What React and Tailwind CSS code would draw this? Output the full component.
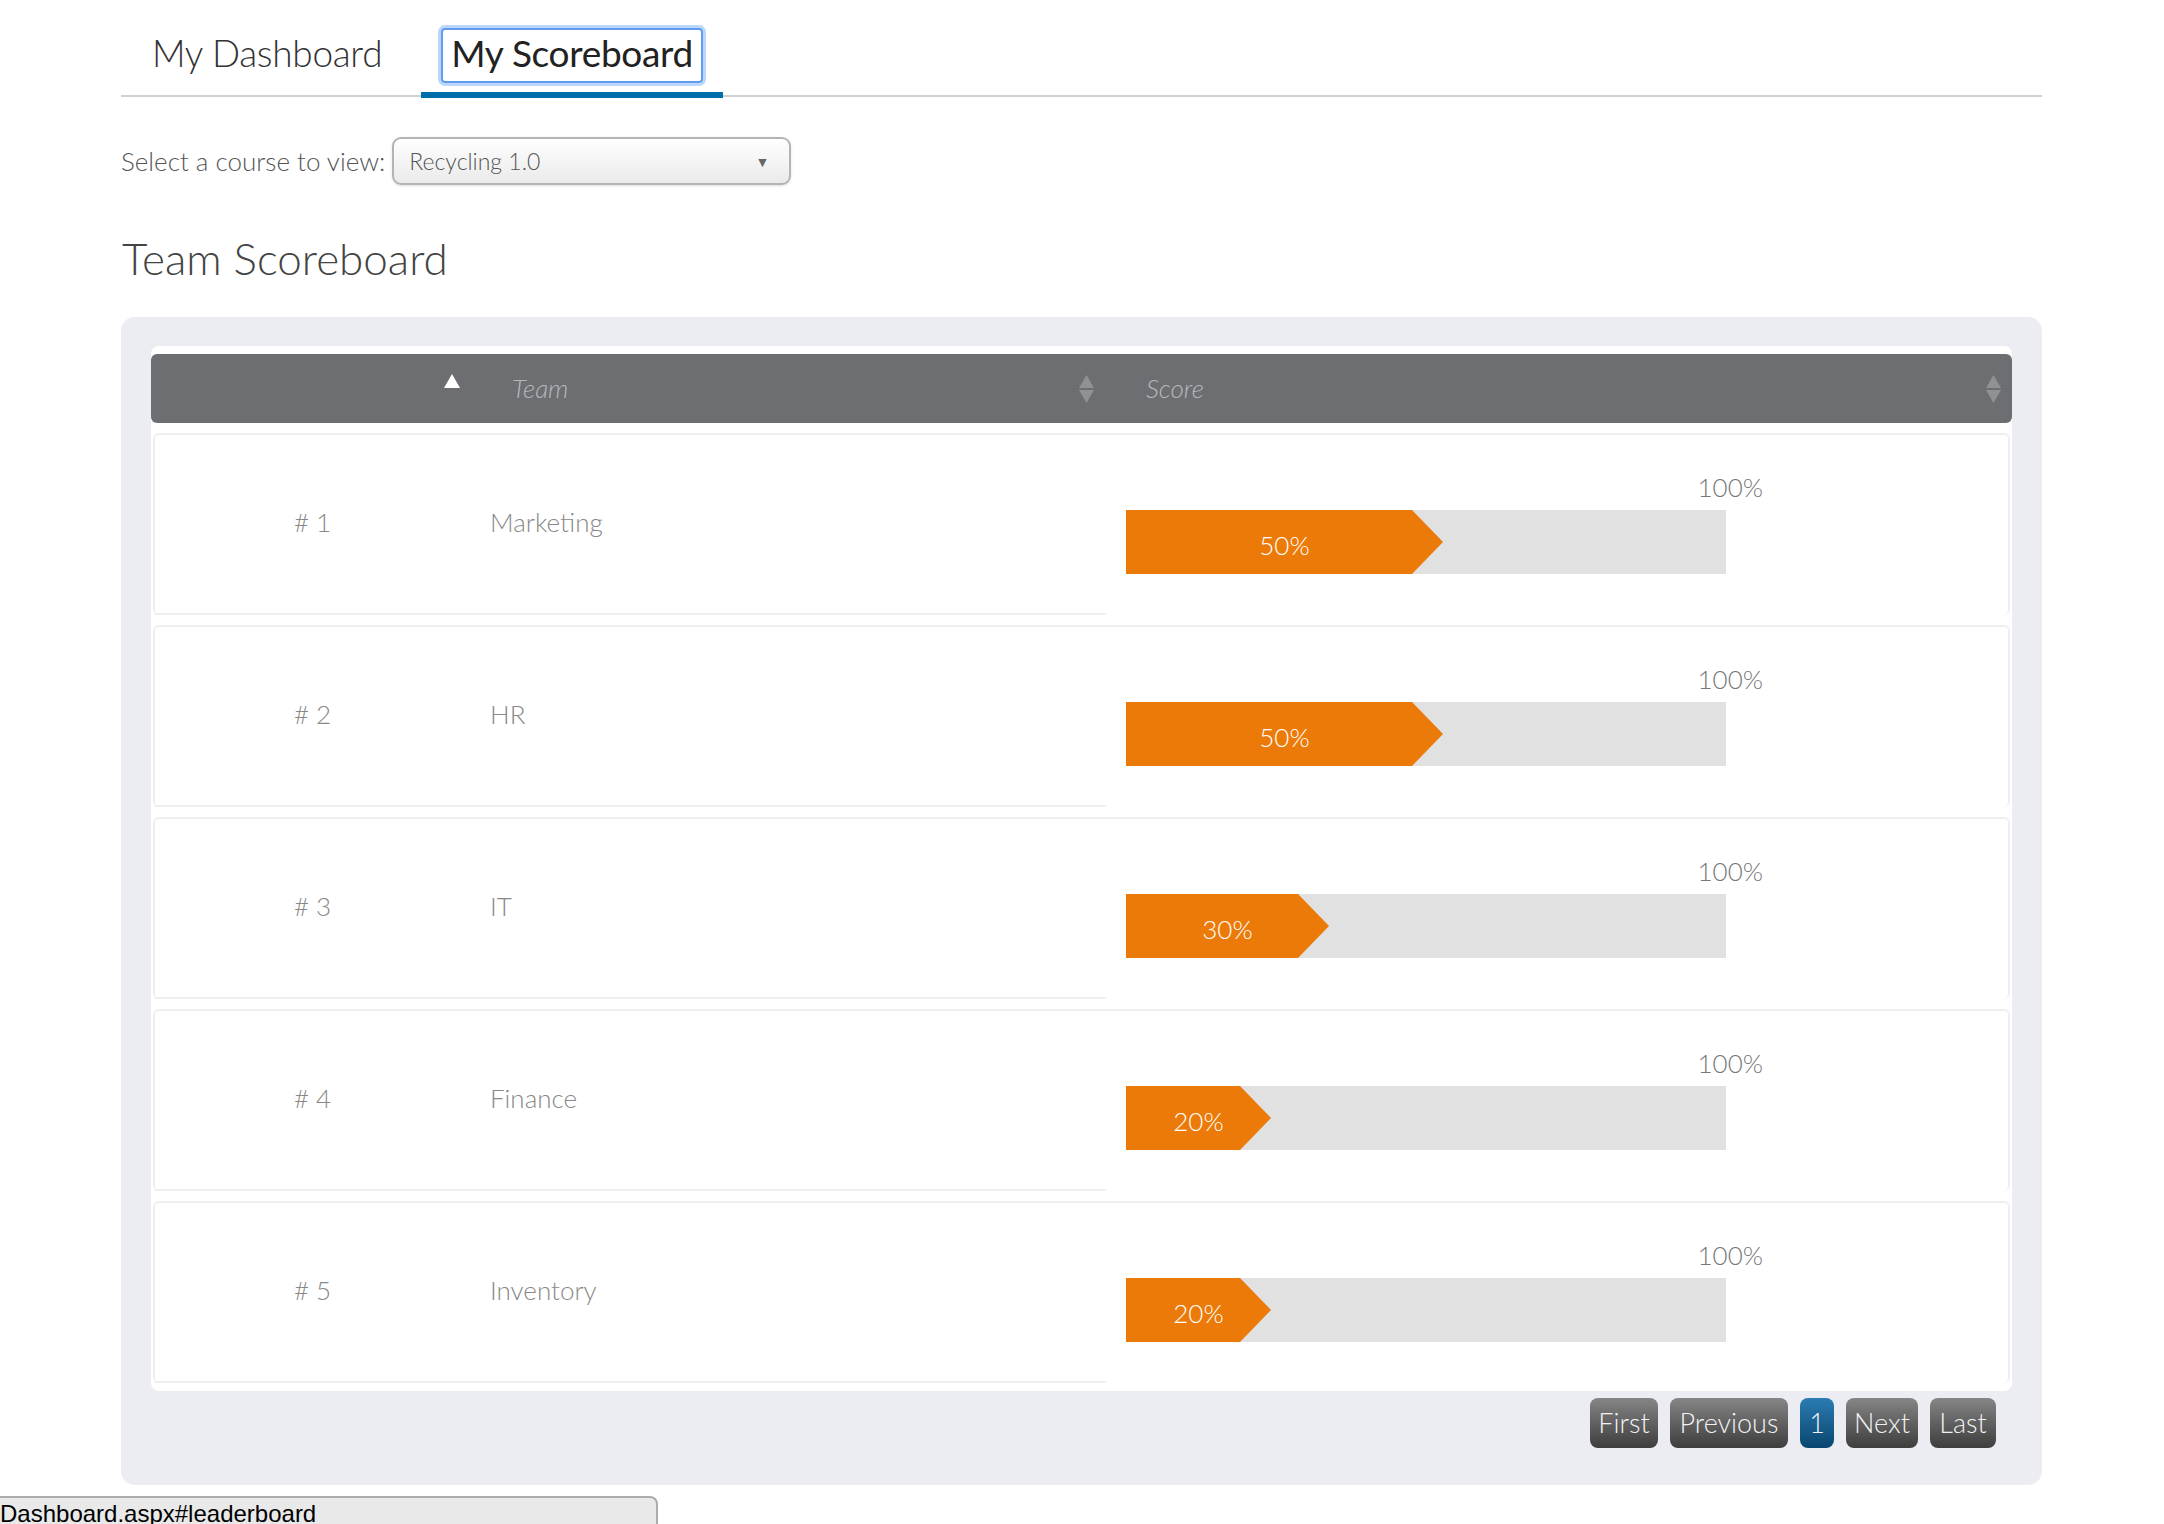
import React from 'react';

// Team scoreboard rows
const rows = [
    { rank: 1, team: 'Marketing', pct: 50 },
    { rank: 2, team: 'HR', pct: 50 },
    { rank: 3, team: 'IT', pct: 30 },
    { rank: 4, team: 'Finance', pct: 20 },
    { rank: 5, team: 'Inventory', pct: 20 },
];

const pages = [
    { label: 'First', w: 'w-[68px]' },
    { label: 'Previous', w: 'w-[118px]' },
    { label: '1', w: 'w-[34px]', active: true },
    { label: 'Next', w: 'w-[72px]' },
    { label: 'Last', w: 'w-[66px]' },
];

const SortUp = () => (
    <svg width="16" height="14" viewBox="0 0 16 14" className="mb-[16px]">
        <polygon points="8,0 16,14 0,14" fill="#ffffff" />
    </svg>
);

const SortBoth = () => (
    <svg width="15" height="28" viewBox="0 0 15 28">
        <polygon points="7.5,0 15,13 0,13" fill="#909195" />
        <polygon points="0,15 15,15 7.5,28" fill="#909195" />
    </svg>
);

function ScoreBar({ pct }) {
    const width = Math.round(pct * 5.72) + 31;
    return (
        <div className="h-[64px] w-[600px] bg-[#e1e1e1]">
            <div
                className="flex h-full items-center justify-center bg-[#ec7a08] pt-[6px] text-[26px] font-light text-white [clip-path:polygon(0_0,calc(100%_-_31px)_0,100%_50%,calc(100%_-_31px)_100%,0_100%)]"
                style={{ width }}
            >
                {pct}%
            </div>
        </div>
    );
}

export default function App() {
    return (
        <div className="relative h-[1524px] w-full overflow-hidden bg-white [font-family:Lato,sans-serif]">
            <div className="ml-[121px] w-[1921px]">
                {/* Tabs */}
                <div className="flex h-[97px] items-end border-b-2 border-[#d0d0d0]">
                    <div className="mb-[-3px] ml-[1px] border-b-[6px] border-transparent px-[20px] pb-[9px] pt-[28px]">
                        <span className="inline-block border-2 border-transparent px-[8px] pb-[8px] pt-[3px] text-[37px] font-light leading-[40px] tracking-[-0.3px] text-[#333]">
                            My Dashboard
                        </span>
                    </div>
                    <div className="mb-[-3px] ml-[9px] border-b-[6px] border-[#006eac] px-[20px] pb-[9px] pt-[28px]">
                        <span className="inline-block rounded-[4px] border-2 border-[#5d9cf0] px-[8px] pb-[8px] pt-[3px] text-[37px] font-normal leading-[40px] tracking-[-0.3px] text-[#222] ring-[3px] ring-[#bcd7fb]">
                            My Scoreboard
                        </span>
                    </div>
                </div>

                {/* Course select */}
                <div className="mt-[40px] flex h-[48px] items-center gap-[7px]">
                    <span className="text-[26px] font-light text-[#555]">Select a course to view:</span>
                    <div className="flex h-[48px] w-[399px] items-center justify-between rounded-[9px] border-2 border-[#b4b4b4] bg-linear-to-b from-white to-[#eaeaea] pl-[15px] pr-[20px] shadow-sm">
                        <span className="text-[23px] font-light text-[#555]">Recycling 1.0</span>
                        <span className="text-[14px] text-[#666]">▼</span>
                    </div>
                </div>

                <h1 className="mt-[47px] pl-[1px] text-[44px] font-light leading-[52px] text-[#444]">Team Scoreboard</h1>

                {/* Scoreboard panel */}
                <div className="mt-[33px] rounded-[14px] bg-[#ecedf2] px-[30px] pb-[37px] pt-[29px]">
                    <div className="flex flex-col gap-[10px] rounded-[8px] bg-white py-[8px]">
                        <div className="flex h-[69px] items-center rounded-[6px] bg-[#6d6e72] text-[26px] font-light italic text-[#b6b7bb]">
                            <div className="flex w-[319px] justify-end pr-[10px]">
                                <SortUp />
                            </div>
                            <div className="flex w-[636px] items-center justify-between pl-[42px] pr-[12px]">
                                <span>Team</span>
                                <SortBoth />
                            </div>
                            <div className="flex flex-1 items-center justify-between pl-[40px] pr-[11px]">
                                <span>Score</span>
                                <SortBoth />
                            </div>
                        </div>

                        {rows.map(r => (
                            <div key={r.rank} className="mx-[2px] flex h-[182px] rounded-[6px] border-x-2 border-t-2 border-[#efefef] text-[26px] font-light text-[#888]">
                                <div className="flex w-[315px] items-center justify-center border-b-2 border-[#efefef] pb-[4px]">
                                    # {r.rank}
                                </div>
                                <div className="flex w-[636px] items-center border-b-2 border-[#efefef] pb-[4px] pl-[20px]">
                                    {r.team}
                                </div>
                                <div className="flex flex-1 flex-col justify-center gap-[8px] pb-[4px] pl-[20px]">
                                    <div className="w-[637px] text-right leading-[30px] text-[#777]">100%</div>
                                    <ScoreBar pct={r.pct} />
                                </div>
                            </div>
                        ))}
                    </div>

                    {/* Pager */}
                    <div className="mt-[7px] flex justify-end gap-[12px] pr-[16px]">
                        {pages.map(p => (
                            <div
                                key={p.label}
                                className={`flex h-[50px] items-center justify-center rounded-[8px] bg-linear-to-b text-[27px] font-light text-[#f2f2f2] ${p.w} ${p.active ? 'from-[#2b7cb2] to-[#08466f]' : 'from-[#868686] to-[#3e3e3e]'}`}
                            >
                                {p.label}
                            </div>
                        ))}
                    </div>
                </div>
            </div>

            {/* Browser status bar */}
            <div className="absolute bottom-0 left-0 h-[28px] w-[658px] overflow-hidden rounded-tr-[8px] border-r-2 border-t-2 border-[#acacac] bg-[#e9e9e9] pt-[2px] text-[24px] leading-[28px] text-black [font-family:'Liberation_Sans',Arial,sans-serif]">
                Dashboard.aspx#leaderboard
            </div>
        </div>
    );
}
